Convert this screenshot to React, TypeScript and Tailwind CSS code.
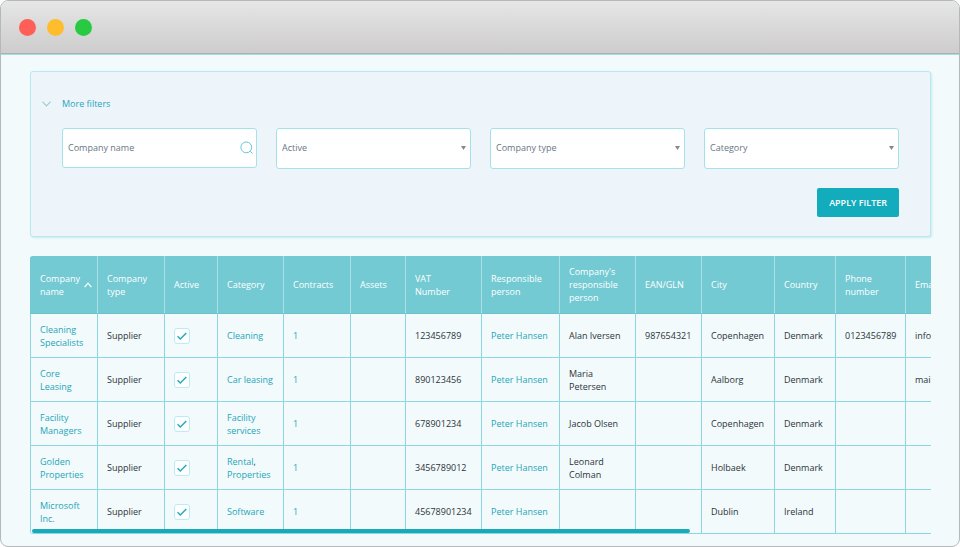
import { useState } from 'react';

type Company = {
  name: string;
  type: string;
  active: boolean;
  categories: string[];
  contracts: number;
  assets: string;
  vat: string;
  responsible: string;
  contact: string;
  ean: string;
  city: string;
  country: string;
  phone: string;
  email: string;
};

const companies: Company[] = [
  { name: 'Cleaning Specialists', type: 'Supplier', active: true, categories: ['Cleaning'], contracts: 1, assets: '', vat: '123456789', responsible: 'Peter Hansen', contact: 'Alan Iversen', ean: '987654321', city: 'Copenhagen', country: 'Denmark', phone: '0123456789', email: 'info@example.com' },
  { name: 'Core Leasing', type: 'Supplier', active: true, categories: ['Car leasing'], contracts: 1, assets: '', vat: '890123456', responsible: 'Peter Hansen', contact: 'Maria Petersen', ean: '', city: 'Aalborg', country: 'Denmark', phone: '', email: 'mail@example.com' },
  { name: 'Facility Managers', type: 'Supplier', active: true, categories: ['Facility services'], contracts: 1, assets: '', vat: '678901234', responsible: 'Peter Hansen', contact: 'Jacob Olsen', ean: '', city: 'Copenhagen', country: 'Denmark', phone: '', email: '' },
  { name: 'Golden Properties', type: 'Supplier', active: true, categories: ['Rental', 'Properties'], contracts: 1, assets: '', vat: '3456789012', responsible: 'Peter Hansen', contact: 'Leonard Colman', ean: '', city: 'Holbaek', country: 'Denmark', phone: '', email: '' },
  { name: 'Microsoft Inc.', type: 'Supplier', active: true, categories: ['Software'], contracts: 1, assets: '', vat: '45678901234', responsible: 'Peter Hansen', contact: '', ean: '', city: 'Dublin', country: 'Ireland', phone: '', email: '' },
];

const columns = [
  { label: 'Company name', width: 'w-[68px]' },
  { label: 'Company type', width: 'w-[67px]' },
  { label: 'Active', width: 'w-[53px]' },
  { label: 'Category', width: 'w-[66px]' },
  { label: 'Contracts', width: 'w-[67px]' },
  { label: 'Assets', width: 'w-[55px]' },
  { label: 'VAT Number', width: 'w-[76px]' },
  { label: 'Responsible person', width: 'w-[78px]' },
  { label: "Company's responsible person", width: 'w-[76px]' },
  { label: 'EAN/GLN', width: 'w-[66px]' },
  { label: 'City', width: 'w-[73px]' },
  { label: 'Country', width: 'w-[61px]' },
  { label: 'Phone number', width: 'w-[70px]' },
  { label: 'Email', width: 'w-[358px]' },
];

const filters = [
  { id: 'active', label: 'Active', options: ['Yes', 'No'] },
  { id: 'type', label: 'Company type', options: ['Supplier'] },
  { id: 'category', label: 'Category', options: ['Cleaning', 'Software'] },
];

const cell = 'h-11 border-r border-b border-[#8cd8e2] pl-[9px] pr-[5px] py-0 first:border-l';

function TitleBar() {
  return (
    <div className="flex h-[53px] items-center gap-[11px] border-b border-[#a9b1b3] bg-linear-to-b from-[#e6e6e6] to-[#cecccc] px-[18px]">
      <span className="size-[17px] rounded-full bg-[#ff5f57]" />
      <span className="size-[17px] rounded-full bg-[#ffbd2e]" />
      <span className="size-[17px] rounded-full bg-[#28ca42]" />
    </div>
  );
}

function FilterSelect({ id, label, options }: { id: string; label: string; options: string[] }) {
  return (
    <div className="relative">
      <select
        id={id}
        aria-label={label}
        defaultValue=""
        className="block h-[41px] w-full appearance-none rounded-[3px] border border-[#a5e1e9] bg-white px-[5px] pb-[3px] text-[#677685] focus:outline-none"
      >
        <option value="">{label}</option>
        {options.map((option) => (
          <option key={option} value={option}>{option}</option>
        ))}
      </select>
      <svg className="pointer-events-none absolute top-[18px] right-[5px] h-1 w-[5px]" viewBox="0 0 5 4" fill="#888888">
        <path d="M0 0h5L2.5 4z" />
      </svg>
    </div>
  );
}

function Filters() {
  const [search, setSearch] = useState('');
  const [open, setOpen] = useState(true);

  return (
    <section className="rounded-[3px] border border-[#b9e8ee] bg-[#edf5fb] px-[31px] pt-[25px] pb-[19px] shadow-[1px_1px_2px_#c5ecf0]">
      <button
        type="button"
        onClick={() => setOpen(!open)}
        className="-ml-5 flex items-center gap-[11px] leading-[13px] font-medium text-[#1fa6b8]"
      >
        <svg className="h-[6px] w-[9px]" viewBox="0 0 9 6" fill="none" stroke="#9fcfd0" strokeWidth="1.2">
          <path d="M0.4 0.6 4.5 4.9 8.6 0.6" />
        </svg>
        More filters
      </button>

      {open && (
        <>
          <div className="mt-[18px] grid grid-cols-4 items-start gap-[19px]">
            <div className="relative">
              <input
                type="text"
                aria-label="Company name"
                placeholder="Company name"
                value={search}
                onChange={(e) => setSearch(e.target.value)}
                className="block h-10 w-full rounded-[3px] border border-[#a5e1e9] bg-white pr-6 pb-[2px] pl-[5px] placeholder:text-[#677685] focus:outline-none"
              />
              <svg className="pointer-events-none absolute top-[13px] right-1 size-[13px]" viewBox="0 0 13 13" fill="none" stroke="#62c5d1">
                <circle cx="6.3" cy="6.4" r="5.4" />
                <path d="m10.2 10.3 2.3 2.2" />
              </svg>
            </div>
            {filters.map((filter) => (
              <FilterSelect key={filter.id} {...filter} />
            ))}
          </div>
          <div className="mt-[19px] flex justify-end">
            <button type="button" className="h-[29px] rounded-[2px] bg-[#12acbc] px-3 font-semibold text-white">
              APPLY FILTER
            </button>
          </div>
        </>
      )}
    </section>
  );
}

function ActiveBox({ checked, label }: { checked: boolean; label: string }) {
  return (
    <span className="relative block size-4">
      <input
        type="checkbox"
        aria-label={label}
        defaultChecked={checked}
        className="peer block size-4 appearance-none rounded-[3px] border border-[#b8edf5] bg-white"
      />
      <svg
        className="pointer-events-none absolute inset-0 hidden size-4 peer-checked:block"
        viewBox="0 0 16 16"
        fill="none"
        stroke="#2aa9bc"
        strokeWidth="1.5"
      >
        <path d="m3.6 8.3 2.7 2.7 6-6" />
      </svg>
    </span>
  );
}

function CompanyTable() {
  return (
    <div className="relative">
      <div className="overflow-x-auto rounded-l-[3px] [scrollbar-width:none]">
        <table className="w-[1234px] table-fixed border-separate border-spacing-0 text-left">
          <thead>
            <tr>
              {columns.map((column, i) => (
                <th
                  key={column.label}
                  className={`${column.width} h-[58px] border-r border-b border-r-[#a9e0e6] border-b-[#68c3cf] bg-[#73cad3] py-0 pr-[5px] pl-[9px] font-medium text-white first:border-l first:border-l-[#73cad3]`}
                >
                  {i === 0 ? (
                    <button type="button" className="flex w-full items-center justify-between text-left">
                      <span className="w-10">{column.label}</span>
                      <svg className="h-[6px] w-2 shrink-0" viewBox="0 0 8 6" fill="none" stroke="#fff" strokeWidth="1.2">
                        <path d="M0.6 5.2 4 1.2 7.4 5.2" />
                      </svg>
                    </button>
                  ) : (
                    <span className="block max-w-[50px]">{column.label}</span>
                  )}
                </th>
              ))}
            </tr>
          </thead>
          <tbody>
            {companies.map((company) => (
              <tr key={company.name}>
                <td className={cell}><a href="#" className="block w-12 text-[#1fa6b8]">{company.name}</a></td>
                <td className={cell}>{company.type}</td>
                <td className={cell}><ActiveBox checked={company.active} label={`${company.name} active`} /></td>
                <td className={cell}>
                  {company.categories.map((category, i) => (
                    <span key={category}>
                      {i > 0 && ', '}
                      <a href="#" className="text-[#1fa6b8]">{category}</a>
                    </span>
                  ))}
                </td>
                <td className={cell}><a href="#" className="text-[#1fa6b8]">{company.contracts}</a></td>
                <td className={cell}>{company.assets}</td>
                <td className={cell}>{company.vat}</td>
                <td className={cell}><a href="#" className="whitespace-nowrap text-[#1fa6b8]">{company.responsible}</a></td>
                <td className={cell}>{company.contact}</td>
                <td className={cell}>{company.ean}</td>
                <td className={cell}>{company.city}</td>
                <td className={cell}>{company.country}</td>
                <td className={cell}>{company.phone}</td>
                <td className={cell}>{company.email}</td>
              </tr>
            ))}
          </tbody>
        </table>
      </div>
      <div className="absolute bottom-px left-[2px] h-1 w-[73%] rounded-full bg-[#19a9ba]" />
    </div>
  );
}

function App() {
  return (
    <div className="bg-white font-['Open_Sans',sans-serif] text-[9px] leading-[13px] text-[#2c3438]">
      <div className="min-h-screen overflow-hidden rounded-[8px] border border-[#b4babb] bg-[#f2fafc]">
        <TitleBar />
        <main className="flex flex-col gap-[19px] border-t border-[#a6dde3] pt-4 pr-7 pb-[11px] pl-[29px]">
          <Filters />
          <CompanyTable />
        </main>
      </div>
    </div>
  );
}

export default App;
